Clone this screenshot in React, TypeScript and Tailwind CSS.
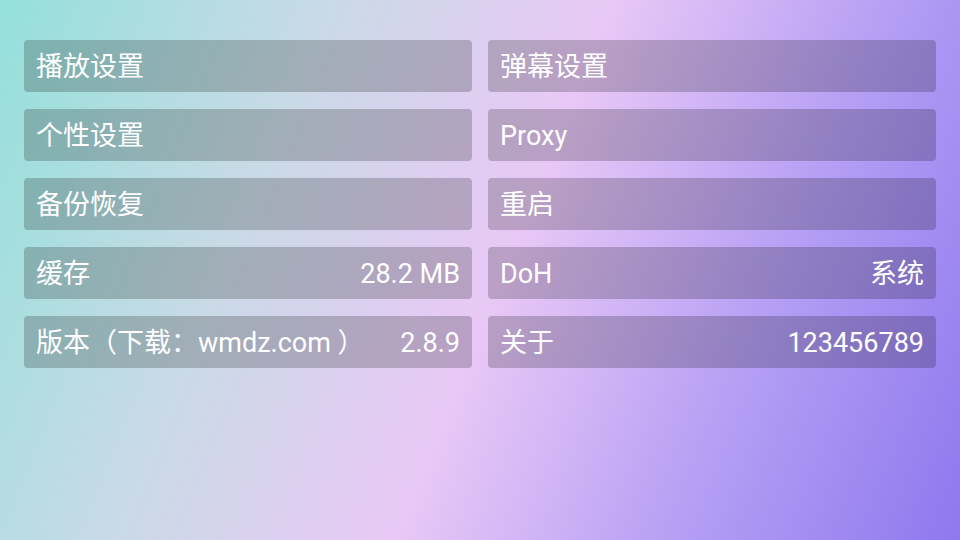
import React from "react";

const rows: [string, string, string, string][] = [
  ["播放设置", "", "弹幕设置", ""],
  ["个性设置", "", "Proxy", ""],
  ["备份恢复", "", "重启", ""],
  ["缓存", "28.2 MB", "DoH", "系统"],
  ["版本（下载：wmdz.com ）", "2.8.9", "关于", "123456789"],
];

function Card({ label, value }: { label: string; value: string }) {
  return (
    <div className="h-[52px] rounded-[4px] bg-black/20 flex items-center justify-between px-[12px] pt-[2px] text-white text-[27px] leading-none">
      <span>{label}</span>
      {value ? <span>{value}</span> : null}
    </div>
  );
}

export default function App() {
  return (
    <div
      className="w-[960px] h-[540px] overflow-hidden bg-[linear-gradient(112deg,#94e0da_0%,#c9dae6_28%,#e9c8f6_52%,#b7a0f4_75%,#8d78ee_100%)] pt-[40px] pl-[24px]"
      style={{ fontFamily: "Roboto, 'Noto Sans CJK SC', sans-serif" }}
    >
      <div className="grid grid-cols-[448px_448px] gap-x-[16px] gap-y-[17px]">
        {rows.map((r, i) => (
          <React.Fragment key={i}>
            <Card label={r[0]} value={r[1]} />
            <Card label={r[2]} value={r[3]} />
          </React.Fragment>
        ))}
      </div>
    </div>
  );
}
